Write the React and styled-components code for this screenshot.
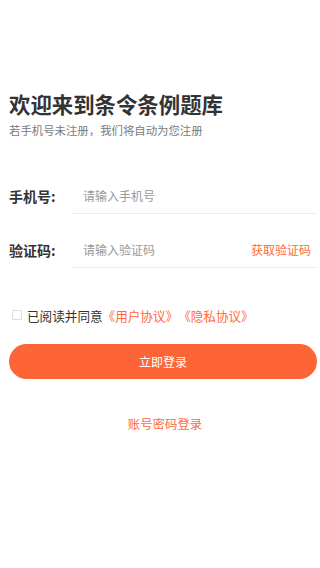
import React from "react";
import styled, { createGlobalStyle } from "styled-components";

const Global = createGlobalStyle`
  html, body { margin: 0; padding: 0; background: #fff; }
  body { font-family: "Noto Sans CJK SC", "Noto Sans", sans-serif; }
  * { box-sizing: border-box; }
`;

const Page = styled.div`
  padding: 89px 3px 0 9px;
  display: flex;
  flex-direction: column;
`;

const Title = styled.h1`
  margin: 0;
  font-size: 21.4px;
  line-height: 30px;
  font-weight: 700;
  color: #333;
`;

const Subtitle = styled.p`
  margin: 3px 0 0;
  font-size: 11.4px;
  line-height: 16px;
  color: #7a7a7a;
`;

const Form = styled.div`
  margin-top: 39px;
  display: flex;
  flex-direction: column;
  gap: 17px;
`;

const Row = styled.div`
  display: flex;
  align-items: center;
`;

const Label = styled.label`
  width: 63px;
  flex-shrink: 0;
  font-size: 14px;
  font-weight: 700;
  color: #333;
`;

const Field = styled.div`
  flex: 1;
  height: 37px;
  display: flex;
  align-items: center;
  border-bottom: 1px solid #ececec;
  padding-left: 11px;
  padding-right: 6px;
`;

const Input = styled.input`
  flex: 1;
  min-width: 0;
  border: none;
  outline: none;
  background: transparent;
  font-family: inherit;
  font-size: 12px;
  color: #333;
  padding: 0;
  &::placeholder { color: #999; }
`;

const CodeLink = styled.span`
  font-size: 12px;
  color: #ff6a3d;
`;

const Agree = styled.div`
  margin-top: 37px;
  height: 20px;
  display: flex;
  align-items: center;
  padding-left: 3px;
  font-size: 12.6px;
  color: #333;
  text-spacing-trim: space-all;
`;

const Box = styled.span`
  width: 10px;
  height: 10px;
  border: 1px solid #ddd;
  border-radius: 1px;
  margin-right: 5px;
`;

const Orange = styled.span`
  color: #ff6a3d;
  text-spacing-trim: space-all;
`;

const Button = styled.button`
  margin-top: 19px;
  height: 35px;
  border: none;
  border-radius: 18px;
  background: #fe6536;
  color: #fff;
  font-family: inherit;
  font-size: 12px;
`;

const AltLogin = styled.div`
  margin-top: 35px;
  text-align: center;
  font-size: 12.4px;
  line-height: 20px;
  color: #ff6a3d;
  padding-left: 4px;
`;

export default function App() {
  return (
    <>
      <Global />
      <Page>
        <Title>欢迎来到条令条例题库</Title>
        <Subtitle>若手机号未注册，我们将自动为您注册</Subtitle>
        <Form>
          <Row>
            <Label>手机号:</Label>
            <Field>
              <Input placeholder="请输入手机号" />
            </Field>
          </Row>
          <Row>
            <Label>验证码:</Label>
            <Field>
              <Input placeholder="请输入验证码" />
              <CodeLink>获取验证码</CodeLink>
            </Field>
          </Row>
        </Form>
        <Agree>
          <Box />
          已阅读并同意<Orange>《用户协议》《隐私协议》</Orange>
        </Agree>
        <Button>立即登录</Button>
        <AltLogin>账号密码登录</AltLogin>
      </Page>
    </>
  );
}
